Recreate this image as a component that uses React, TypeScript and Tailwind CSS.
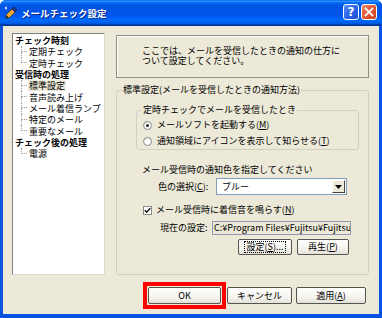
import React from "react";

function U({ children }: { children: React.ReactNode }) {
  return <span className="underline underline-offset-[1px]">{children}</span>;
}

function TitleBar() {
  return (
    <div className="h-[26px] shrink-0 flex items-start bg-[linear-gradient(to_bottom,#0058EE_0%,#3593FF_4%,#288EFF_6%,#127DFF_8%,#036FFC_10%,#0262EE_14%,#0057E5_20%,#0054E3_24%,#0055EB_56%,#005BF5_66%,#026AFE_76%,#0062EF_86%,#0052D6_92%,#0040AB_94%,#003092_100%)]">
      <div className="ml-[4px] mt-[6px] w-[14px] h-[14px]">
        <svg width="14" height="14" viewBox="0 0 14 14">
          <path d="M2 9 L8 3 L11 6 L5 12 Z" fill="#F2A93B" stroke="#5a3b0a" strokeWidth="0.8" />
          <path d="M8 3 L10 1 L13 4 L11 6 Z" fill="#1d3f8f" stroke="#0d1d4d" strokeWidth="0.8" />
          <path d="M2 9 L5 12 L1 13 Z" fill="#333" />
          <path d="M1 2 L2 4 L3 2 L2 0 Z" fill="#fff" />
        </svg>
      </div>
      <div className="ml-[3px] mt-[7px] text-white font-bold text-[9.5px] leading-[12px] [text-shadow:1px_1px_0_#0a2a8a]">
        メールチェック設定
      </div>
      <div className="flex-1" />
      <div className="mt-[4px] w-[16px] h-[16px] rounded-[3px] border border-white bg-[linear-gradient(135deg,#5c8ff7_0%,#2d63e8_50%,#1c4fd6_100%)] flex items-center justify-center text-white font-bold text-[12px] leading-none font-['DejaVu_Sans',sans-serif]">
        ?
      </div>
      <div className="ml-[2px] mr-[5px] mt-[4px] w-[16px] h-[16px] rounded-[3px] border border-white bg-[linear-gradient(135deg,#f08a68_0%,#e2552f_50%,#c7421e_100%)] flex items-center justify-center">
        <svg width="10" height="10" viewBox="0 0 10 10">
          <path d="M1.5 1.5 L8.5 8.5 M8.5 1.5 L1.5 8.5" stroke="#fff" strokeWidth="1.8" strokeLinecap="square" />
        </svg>
      </div>
    </div>
  );
}

type TreeItem = { label: string; children?: { label: string; selected?: boolean }[] };

const tree: TreeItem[] = [
  { label: "チェック時刻", children: [{ label: "定期チェック" }, { label: "定時チェック" }] },
  {
    label: "受信時の処理",
    children: [
      { label: "標準設定", selected: true },
      { label: "音声読み上げ" },
      { label: "メール着信ランプ" },
      { label: "特定のメール" },
      { label: "重要なメール" },
    ],
  },
  { label: "チェック後の処理", children: [{ label: "電源" }] },
];

function Tree() {
  return (
    <div className="w-[93px] h-[242px] bg-white border-l border-t border-[#808080] border-r border-b border-r-[#dcdad0] border-b-[#dcdad0] pt-[1px] whitespace-nowrap leading-[11px]">
      {tree.map((p) => (
        <div key={p.label}>
          <div className="h-[11.3px] flex items-center pl-[2px] font-bold leading-[11px]">{p.label}</div>
          {p.children?.map((c, i) => {
            const last = i === (p.children?.length ?? 0) - 1;
            return (
              <div key={c.label} className="h-[11.3px] flex items-stretch">
                <div className="ml-[8px] w-[6px] flex flex-col">
                  <div className="h-1/2 border-l border-b border-dotted border-[#a0a0a0]" />
                  {last ? <div className="h-1/2" /> : <div className="h-1/2 border-l border-dotted border-[#a0a0a0]" />}
                </div>
                <div className="ml-[1px] flex items-center">
                  <span className={c.selected ? "bg-[#ECE9D8] px-[1px] leading-[11px]" : "px-[1px] leading-[11px]"}>
                    {c.label}
                  </span>
                </div>
              </div>
            );
          })}
        </div>
      ))}
    </div>
  );
}

function Radio({ checked }: { checked?: boolean }) {
  return (
    <div className="w-[9px] h-[9px] rounded-full border border-[#8a8a8a] bg-[radial-gradient(circle_at_60%_60%,#ffffff_0%,#ffffff_40%,#dcdcd4_100%)] flex items-center justify-center">
      {checked ? <div className="w-[3px] h-[3px] rounded-full bg-[#222]" /> : null}
    </div>
  );
}

function XPButton({ children, className, focus }: { children: React.ReactNode; className: string; focus?: boolean }) {
  return (
    <div
      className={
        "rounded-[2px] border border-[#555550] bg-[linear-gradient(to_bottom,#ffffff_0%,#f5f4ee_60%,#e3e1d8_100%)] flex items-center justify-center " +
        className
      }
    >
      {focus ? (
        <span className="border border-dotted border-black px-[2px] leading-[10px]">{children}</span>
      ) : (
        <span className="leading-[10px]">{children}</span>
      )}
    </div>
  );
}

export default function App() {
  return (
    <div className="w-[382px] h-[318px] font-['Noto_Sans_CJK_JP','Noto_Sans',sans-serif] text-[9px] leading-[12px] text-black">
      <div className="w-full h-full flex flex-col bg-[#0A53E0] rounded-t-[6px] overflow-hidden">
        <TitleBar />
        <div className="flex-1 mx-[3px] mb-[4px] bg-[#ECE9D8] flex flex-col pl-[9px] pt-[7px]">
          <div className="flex">
            <Tree />
            <div className="ml-[11px] w-[253px] mt-[2px] flex flex-col">
              <div className="h-[43px] border border-[#8f8e87] shadow-[inset_1px_1px_0_#ffffff] pl-[25px] pt-[10px] leading-[10px]">
                <div>ここでは、メールを受信したときの通知の仕方に</div>
                <div>ついて設定してください。</div>
              </div>
              <fieldset className="mt-[6px] h-[191px] border border-[#D0D0BF] rounded-[3px]">
                <legend className="ml-[5px] px-[1px] leading-[12px]">標準設定(メールを受信したときの通知方法)</legend>
                <fieldset className="mt-[8px] ml-[19px] w-[223px] h-[46px] border border-[#D0D0BF] rounded-[3px]">
                  <legend className="ml-[5px] px-[1px] leading-[12px]">定時チェックでメールを受信したとき</legend>
                  <div className="pt-[1px] pl-[6px]">
                    <div className="h-[16px] flex items-center">
                      <Radio checked />
                      <span className="ml-[5px]">
                        メールソフトを起動する(<U>M</U>)
                      </span>
                    </div>
                    <div className="h-[16px] flex items-center">
                      <Radio />
                      <span className="ml-[5px]">
                        通知領域にアイコンを表示して知らせる(<U>T</U>)
                      </span>
                    </div>
                  </div>
                </fieldset>
                <div className="mt-[14px] pl-[25px]">メール受信時の通知色を指定してください</div>
                <div className="mt-[2px] h-[17px] flex items-center pl-[41px]">
                  <div className="w-[58px]">
                    色の選択(<U>C</U>):
                  </div>
                  <div className="w-[131px] h-[17px] border border-[#7F9DB9] bg-white flex items-center">
                    <div className="flex-1 pl-[5px]">ブルー</div>
                    <div className="w-[13px] h-[13px] mr-[1px] bg-[#ECE9D8] border border-t-white border-l-white border-r-[#404040] border-b-[#404040] flex items-center justify-center">
                      <svg width="7" height="4" viewBox="0 0 7 4">
                        <path d="M0 0 L7 0 L3.5 4 Z" fill="#000" />
                      </svg>
                    </div>
                  </div>
                </div>
                <div className="mt-[9px] h-[12px] flex items-center pl-[26px]">
                  <div className="w-[9px] h-[9px] border border-[#8a8a8a] bg-white flex items-center justify-center">
                    <svg width="7" height="7" viewBox="0 0 7 7">
                      <path d="M0.8 3.2 L2.6 5.2 L6.2 1.2" stroke="#111" strokeWidth="1.4" fill="none" />
                    </svg>
                  </div>
                  <span className="ml-[4px]">
                    メール受信時に着信音を鳴らす(<U>N</U>)
                  </span>
                </div>
                <div className="mt-[5px] h-[14px] flex items-center pl-[43px]">
                  <div className="w-[52px]">現在の設定:</div>
                  <div className="w-[139px] h-[14px] border border-[#8f9bb0] bg-[#ECE9D8] overflow-hidden whitespace-nowrap pl-[1px] leading-[12px]">
                    C:¥Program Files¥Fujitsu¥Fujitsu
                  </div>
                </div>
                <div className="mt-[4px] flex pl-[121px]">
                  <XPButton className="w-[54px] h-[16px]" focus>
                    設定(<U>S</U>)...
                  </XPButton>
                  <XPButton className="ml-[5px] w-[52px] h-[16px]">
                    再生(<U>P</U>)
                  </XPButton>
                </div>
              </fieldset>
            </div>
          </div>
          <div className="mt-[12px] flex justify-end pr-[13px]">
            <div className="relative">
              <XPButton className="w-[73px] h-[17px] border-[#3a3a3a]">OK</XPButton>
              <div className="absolute -left-[5px] -right-[5px] -top-[5px] -bottom-[5px] border-[4px] border-[#ff0000]" />
            </div>
            <XPButton className="ml-[6px] w-[65px] h-[17px]">キャンセル</XPButton>
            <XPButton className="ml-[4px] w-[70px] h-[17px]">
              適用(<U>A</U>)
            </XPButton>
          </div>
        </div>
      </div>
    </div>
  );
}
